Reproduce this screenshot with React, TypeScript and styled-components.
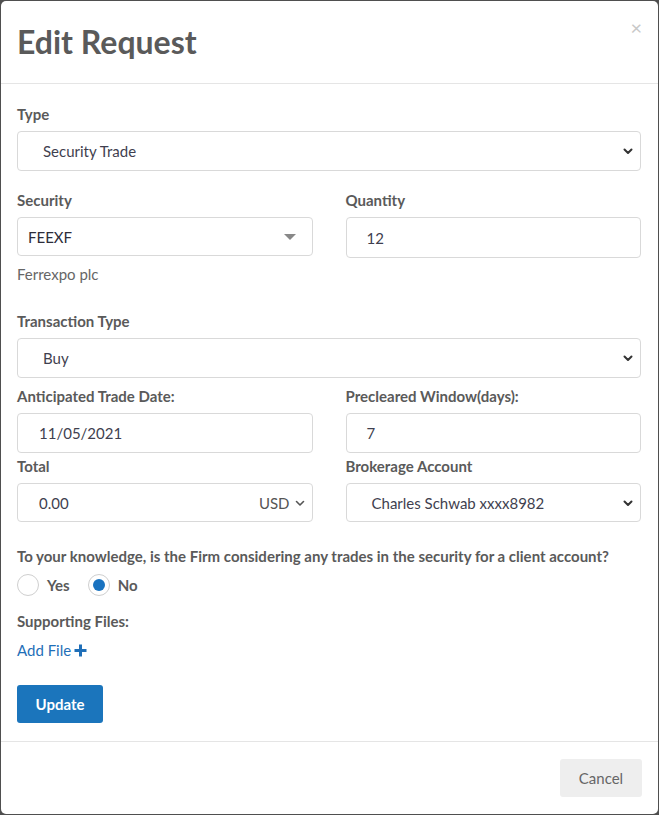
import React from "react";
import styled, { createGlobalStyle } from "styled-components";

const Global = createGlobalStyle`
  html, body { margin: 0; padding: 0; }
  body {
    background: #4f4f4f;
    font-family: Lato, "Open Sans", sans-serif;
  }
  #root { padding: 1px; }
`;

const Modal = styled.div`
  background: #fff;
  border-radius: 5px;
  height: 813px;
  box-sizing: border-box;
  display: flex;
  flex-direction: column;
`;

const Header = styled.div`
  display: flex;
  justify-content: space-between;
  align-items: flex-start;
  height: 83px;
  box-sizing: border-box;
  padding: 21px 16px 0 16px;
  border-bottom: 1px solid #e5e5e5;
`;

const Title = styled.h4`
  margin: 0;
  font-size: 32px;
  font-weight: 700;
  color: #5a5a5a;
`;

const Close = styled.span`
  color: #c8c8c8;
  font-size: 20px;
  line-height: 1;
  margin-top: -5px;
  margin-right: 0;
`;

const Body = styled.div`
  padding: 20px 17px 0 16px;
  display: flex;
  flex-direction: column;
  flex: 1;
`;

const Label = styled.div<{ $mb?: number; $mt?: number }>`
  font-size: 15px;
  font-weight: 700;
  color: #5a5a5a;
  line-height: 20px;
  margin-top: ${(p) => p.$mt ?? 0}px;
  margin-bottom: ${(p) => p.$mb ?? 7}px;
`;

const Control = styled.div<{ $pl?: number; $pr?: number; $dark?: boolean; $h?: number }>`
  height: ${(p) => p.$h ?? 40}px;
  box-sizing: border-box;
  border: 1px solid #d9d9d9;
  border-radius: 4px;
  display: flex;
  align-items: center;
  padding: 0 ${(p) => p.$pr ?? 6}px 0 ${(p) => p.$pl ?? 20}px;
  font-size: 15px;
  color: ${(p) => (p.$dark ? "#2d2d3a" : "#3f3f4f")};
`;

const Value = styled.span`
  flex: 1;
  white-space: nowrap;
`;

const Row = styled.div<{ $mt?: number }>`
  display: grid;
  grid-template-columns: 1fr 1fr;
  column-gap: 33px;
  align-items: start;
  margin-top: ${(p) => p.$mt ?? 0}px;
`;

const Group = styled.div<{ $mb?: number }>`
  display: flex;
  flex-direction: column;
  margin-bottom: ${(p) => p.$mb ?? 0}px;
`;

const Hint = styled.div`
  font-size: 15px;
  color: #666;
  margin-top: 8px;
  line-height: 20px;
`;

const Currency = styled.span`
  display: flex;
  align-items: center;
  gap: 5px;
  color: #555;
  font-size: 15px;
`;

const Question = styled.div`
  font-size: 15px;
  font-weight: 700;
  color: #5a5a5a;
  line-height: 20px;
  margin-top: 24px;
`;

const Radios = styled.div`
  display: flex;
  align-items: center;
  margin-top: 8px;
  gap: 18px;
`;

const RadioItem = styled.label`
  display: flex;
  align-items: center;
  gap: 8px;
  font-size: 15px;
  font-weight: 700;
  color: #5a5a5a;
`;

const RadioCircle = styled.span<{ $on?: boolean }>`
  width: 22px;
  height: 22px;
  box-sizing: border-box;
  border-radius: 50%;
  border: 1px solid #cfcfcf;
  display: flex;
  align-items: center;
  justify-content: center;
  &::after {
    content: "";
    width: 12px;
    height: 12px;
    border-radius: 50%;
    background: ${(p) => (p.$on ? "#1a73c0" : "transparent")};
  }
`;

const AddFile = styled.a`
  display: flex;
  align-items: center;
  gap: 3px;
  font-size: 15px;
  color: #1f6fb8;
  margin-top: 9px;
  line-height: 20px;
`;

const PrimaryButton = styled.button`
  margin-top: 25px;
  align-self: flex-start;
  width: 86px;
  height: 38px;
  background: #1b75bc;
  color: #fff;
  border: none;
  border-radius: 3px;
  font-family: inherit;
  font-size: 15px;
  font-weight: 700;
`;

const Footer = styled.div`
  border-top: 1px solid #e5e5e5;
  height: 73px;
  box-sizing: border-box;
  display: flex;
  justify-content: flex-end;
  align-items: flex-start;
  padding: 17px 16px 0;
`;

const SecondaryButton = styled.button`
  width: 82px;
  height: 38px;
  background: #eeeeee;
  color: #666;
  border: none;
  border-radius: 3px;
  font-family: inherit;
  font-size: 15px;
`;

const Chevron = () => (
  <svg width="12" height="12" viewBox="0 0 12 12">
    <path d="M2.5 4.5 L6 8 L9.5 4.5" fill="none" stroke="#333" strokeWidth="2" strokeLinecap="round" strokeLinejoin="round" />
  </svg>
);

const SmallChevron = () => (
  <svg width="10" height="10" viewBox="0 0 10 10">
    <path d="M1.5 3.5 L5 7 L8.5 3.5" fill="none" stroke="#555" strokeWidth="1.6" strokeLinecap="round" strokeLinejoin="round" />
  </svg>
);

const Caret = () => (
  <svg width="14" height="8" viewBox="0 0 14 8" style={{ marginRight: 9 }}>
    <path d="M1 1 L13 1 L7 7 Z" fill="#888" />
  </svg>
);

const Plus = () => (
  <svg width="13" height="13" viewBox="0 0 13 13">
    <path d="M5 0.5 H8 V5 H12.5 V8 H8 V12.5 H5 V8 H0.5 V5 H5 Z" fill="#1f6fb8" />
  </svg>
);

export default function App() {
  return (
    <>
      <Global />
      <Modal>
        <Header>
          <Title>Edit Request</Title>
          <Close>×</Close>
        </Header>
        <Body>
          <Group $mb={19}>
            <Label>Type</Label>
            <Control $pl={25}>
              <Value>Security Trade</Value>
              <Chevron />
            </Control>
          </Group>
          <Row>
            <Group>
              <Label>Security</Label>
              <Control $pl={10} $h={39} $dark>
                <Value>FEEXF</Value>
                <Caret />
              </Control>
              <Hint>Ferrexpo plc</Hint>
            </Group>
            <Group>
              <Label>Quantity</Label>
              <Control $h={41}>
                <Value>12</Value>
              </Control>
            </Group>
          </Row>
          <Group $mb={8}>
            <Label $mt={27}>Transaction Type</Label>
            <Control $pl={25}>
              <Value>Buy</Value>
              <Chevron />
            </Control>
          </Group>
          <Row>
            <Group>
              <Label>Anticipated Trade Date:</Label>
              <Control $pl={21}>
                <Value>11/05/2021</Value>
              </Control>
            </Group>
            <Group>
              <Label>Precleared Window(days):</Label>
              <Control $pl={20}>
                <Value>7</Value>
              </Control>
            </Group>
          </Row>
          <Row $mt={3}>
            <Group>
              <Label>Total</Label>
              <Control $pl={21} $pr={7} $h={39}>
                <Value>0.00</Value>
                <Currency>
                  USD
                  <SmallChevron />
                </Currency>
              </Control>
            </Group>
            <Group>
              <Label>Brokerage Account</Label>
              <Control $pl={25} $h={39}>
                <Value>Charles Schwab xxxx8982</Value>
                <Chevron />
              </Control>
            </Group>
          </Row>
          <Question>To your knowledge, is the Firm considering any trades in the security for a client account?</Question>
          <Radios>
            <RadioItem>
              <RadioCircle />
              Yes
            </RadioItem>
            <RadioItem>
              <RadioCircle $on />
              No
            </RadioItem>
          </Radios>
          <Label $mt={15} $mb={0}>Supporting Files:</Label>
          <AddFile>
            Add File <Plus />
          </AddFile>
          <PrimaryButton>Update</PrimaryButton>
        </Body>
        <Footer>
          <SecondaryButton>Cancel</SecondaryButton>
        </Footer>
      </Modal>
    </>
  );
}
